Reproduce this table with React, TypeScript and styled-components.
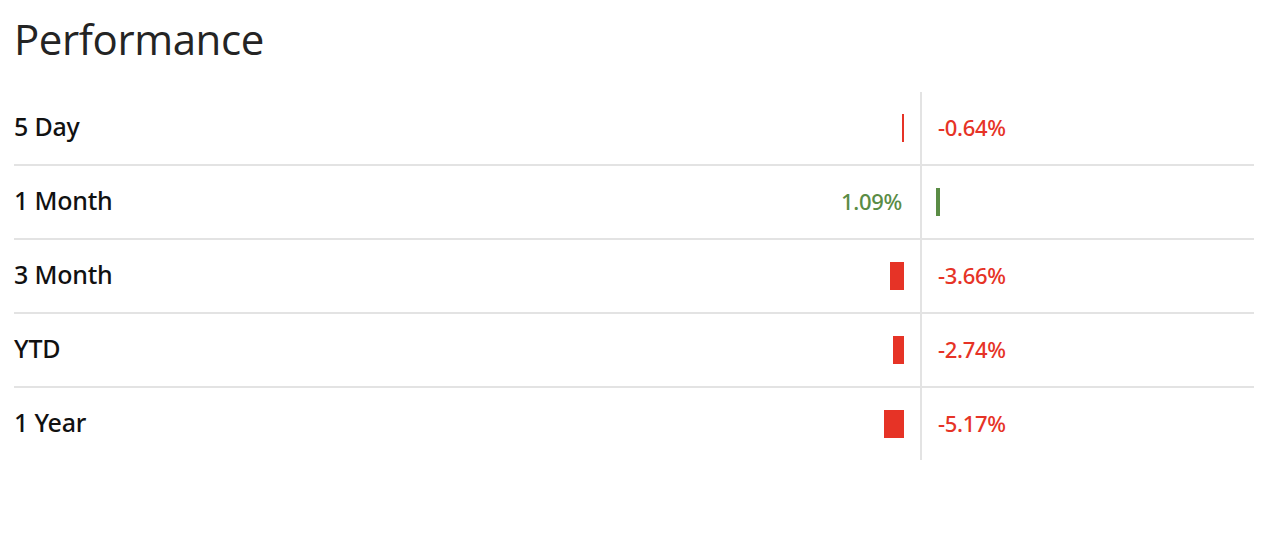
import styled, { createGlobalStyle } from "styled-components"

const GlobalStyle = createGlobalStyle`
  body {
    margin: 0;
    background: #fff;
    font-family: "Open Sans", "Noto Sans", sans-serif;
  }
`

type Item = { label: string; value: number }

const data: Item[] = [
  { label: "5 Day", value: -0.64 },
  { label: "1 Month", value: 1.09 },
  { label: "3 Month", value: -3.66 },
  { label: "YTD", value: -2.74 },
  { label: "1 Year", value: -5.17 },
]

const max = Math.max(...data.map((d) => Math.abs(d.value)))
const MAX_BAR = 20

const fmt = (v: number) => v.toFixed(2) + "%"

const App = () => {
  return (
    <Container>
      <GlobalStyle />
      <Title>Performance</Title>
      <Table>
        {data.map((d) => {
          const up = d.value >= 0
          const w = (Math.abs(d.value) / max) * MAX_BAR
          return (
            <Row key={d.label}>
              <Label>{d.label}</Label>
              <Left>
                {up ? (
                  <Value $up>{fmt(d.value)}</Value>
                ) : (
                  <Bar $up={false} style={{ width: w }} />
                )}
              </Left>
              <Right>
                {up ? (
                  <Bar $up style={{ width: w }} />
                ) : (
                  <Value $up={false}>{fmt(d.value)}</Value>
                )}
              </Right>
            </Row>
          )
        })}
      </Table>
    </Container>
  )
}

export default App

const Container = styled.div`
  width: 1240px;
  padding: 15px 0 0 14px;
`

const Title = styled.h2`
  margin: 0 0 29px 0;
  font-size: 42px;
  line-height: 48px;
  font-weight: 400;
  color: #242424;
  letter-spacing: -0.4px;
`

const Table = styled.div`
  display: flex;
  flex-direction: column;
`

const Row = styled.div`
  display: grid;
  grid-template-columns: 180px 726px 1fr;
  height: 72px;
  border-bottom: 2px solid #e3e3e3;
  &:last-child {
    border-bottom: none;
  }
`

const Label = styled.div`
  display: flex;
  align-items: center;
  padding-bottom: 5px;
  font-family: "Noto Sans", "Open Sans", sans-serif;
  font-size: 25px;
  font-weight: 500;
  color: #111;
  letter-spacing: -0.2px;
`

const Left = styled.div`
  display: flex;
  align-items: center;
  justify-content: flex-end;
  padding-right: 16px;
`

const Right = styled.div`
  display: flex;
  align-items: center;
  padding-left: 14px;
  border-left: 2px solid #e3e3e3;
`

const Bar = styled.div<{ $up: boolean }>`
  height: 28px;
  min-width: 2px;
  background: ${(p) => (p.$up ? "#5a8c45" : "#e63326")};
`

const Value = styled.span<{ $up: boolean }>`
  font-family: "Noto Sans", "Open Sans", sans-serif;
  font-size: 22px;
  font-weight: 500;
  letter-spacing: -0.3px;
  padding-bottom: 2px;
  color: ${(p) => (p.$up ? "#5a8c45" : "#e63326")};
  ${(p) => (p.$up ? "margin-right: 2px;" : "padding-left: 2px;")}
`
